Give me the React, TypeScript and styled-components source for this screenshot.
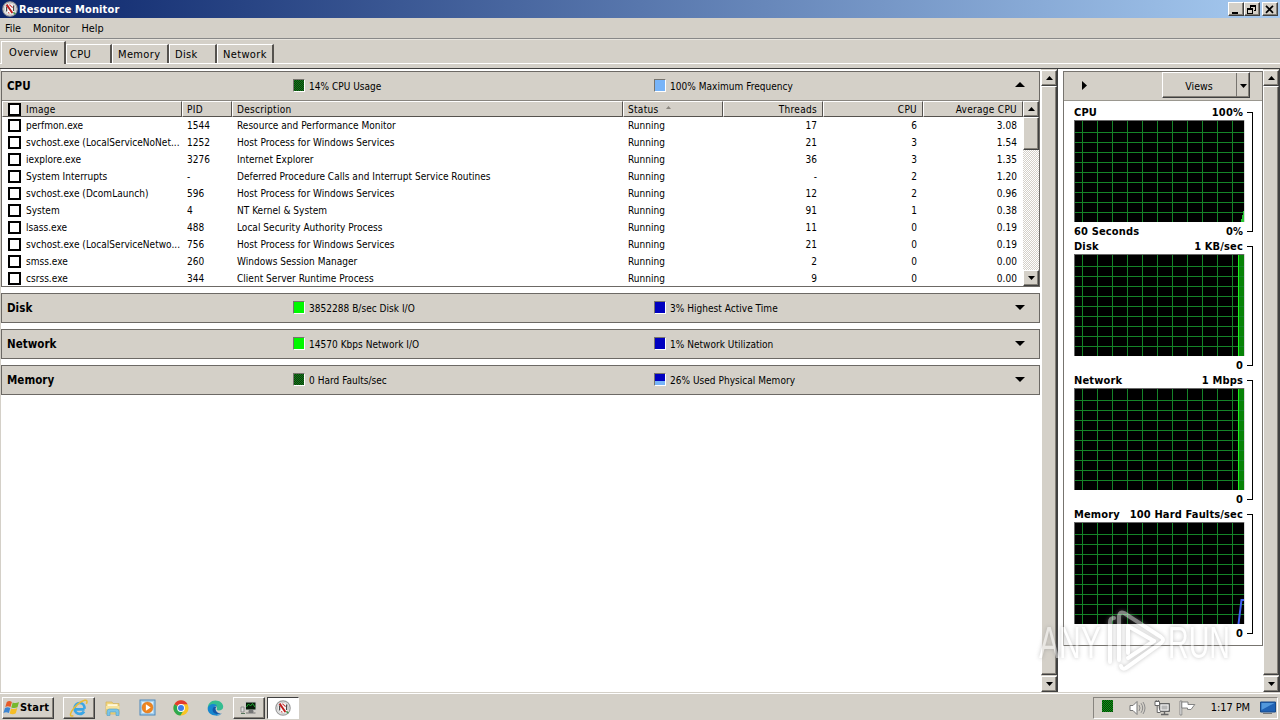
import type { ReactNode } from 'react';
import styled, { createGlobalStyle, css } from 'styled-components';

type Process = {
    image: string;
    pid: string;
    description: string;
    threads: string;
    cpu: string;
    average: string;
};

const processes: Process[] = [
    { image: 'perfmon.exe', pid: '1544', description: 'Resource and Performance Monitor', threads: '17', cpu: '6', average: '3.08' },
    { image: 'svchost.exe (LocalServiceNoNet...', pid: '1252', description: 'Host Process for Windows Services', threads: '21', cpu: '3', average: '1.54' },
    { image: 'iexplore.exe', pid: '3276', description: 'Internet Explorer', threads: '36', cpu: '3', average: '1.35' },
    { image: 'System Interrupts', pid: '-', description: 'Deferred Procedure Calls and Interrupt Service Routines', threads: '-', cpu: '2', average: '1.20' },
    { image: 'svchost.exe (DcomLaunch)', pid: '596', description: 'Host Process for Windows Services', threads: '12', cpu: '2', average: '0.96' },
    { image: 'System', pid: '4', description: 'NT Kernel & System', threads: '91', cpu: '1', average: '0.38' },
    { image: 'lsass.exe', pid: '488', description: 'Local Security Authority Process', threads: '11', cpu: '0', average: '0.19' },
    { image: 'svchost.exe (LocalServiceNetwo...', pid: '756', description: 'Host Process for Windows Services', threads: '21', cpu: '0', average: '0.19' },
    { image: 'smss.exe', pid: '260', description: 'Windows Session Manager', threads: '2', cpu: '0', average: '0.00' },
    { image: 'csrss.exe', pid: '344', description: 'Client Server Runtime Process', threads: '9', cpu: '0', average: '0.00' },
];

const gridX = [8, 23, 38, 53, 68, 83, 98, 113, 128, 143, 158];
const gridY = [12, 22, 32, 42, 52, 62, 72, 82, 92];

const Arrow = ({ dir, size = 7 }: { dir: 'up' | 'down' | 'right'; size?: number }) => {
    const half = Math.ceil(size / 2);
    if (dir === 'right') {
        return (
            <svg width={half + 1} height={size + 2} viewBox={`0 0 ${half + 1} ${size + 2}`}>
                <path d={`M0 0L${half + 1} ${(size + 2) / 2}L0 ${size + 2}Z`} />
            </svg>
        );
    }
    return (
        <svg width={size} height={half} viewBox={`0 0 ${size} ${half}`}>
            <path d={dir === 'up' ? `M0 ${half}L${size / 2} 0L${size} ${half}Z` : `M0 0L${size} 0L${size / 2} ${half}Z`} />
        </svg>
    );
};

const GaugeIcon = ({ size = 16 }: { size?: number }) => (
    <svg width={size} height={size} viewBox="0 0 16 16">
        <circle cx="8" cy="8" r="7.2" fill="#eee" stroke="#9a9a9a" strokeWidth="1.2" />
        <circle cx="8" cy="8" r="5.5" fill="#fff" stroke="#b5b5b5" strokeWidth=".7" />
        <path d="M4.6 10.4V5.4M11.6 10V4.6" stroke="#4a4a4a" strokeWidth="1.3" />
        <path d="M4.6 3.6l5.8 8.4" stroke="#c01c1c" strokeWidth="2" />
        <path d="M7.4 3.6l3.2 3M6 11.4l1.4 1" stroke="#c23c3c" strokeWidth="1.1" />
        <path d="M11.4 11.2l2 2" stroke="#4e9a52" strokeWidth="1.6" />
    </svg>
);

const IeIcon = () => (
    <svg width="20" height="18" viewBox="0 0 20 18">
        <path d="M15.6 10.3H6.3M15.6 9.8C15.6 6.3 13.6 4 10.7 4 7.7 4 5.6 6.4 5.6 9.5s2.1 5.4 5.2 5.4c2 0 3.4-.9 4.2-2.4" fill="none" stroke="#3aa6e6" strokeWidth="2.7" />
        <path d="M4.4 16.6C1.4 18 .6 16 2.6 12.4 5 8 11 2.4 15.6 1.3c2.6-.5 3 1.2 1.8 3.6" fill="none" stroke="#e9bb35" strokeWidth="1.5" />
    </svg>
);

const FolderIcon = () => (
    <svg width="16" height="16" viewBox="0 0 16 16">
        <path d="M1 2h6l1 1.5h6V14H1z" fill="#f1d67c" stroke="#d2b25b" strokeWidth=".7" />
        <path d="M2.5 4.2h10v3h-10z" fill="#fff8dc" />
        <path d="M1 6h13.5V9H1z" fill="#f7e39c" />
        <path d="M2 15.5v-4Q2 9 4.5 9h7Q14 9 14 11.5v4h-3V12H5v3.5z" fill="#79c5e8" stroke="#529dc6" strokeWidth=".6" />
    </svg>
);

const PlayerIcon = () => (
    <svg width="17" height="17" viewBox="0 0 17 17">
        <rect x="1" y="1" width="15" height="15" fill="#a9d2ef" stroke="#4d88bb" />
        <rect x="3" y="3" width="11" height="11" fill="#dceefa" />
        <circle cx="8.5" cy="8.5" r="5.5" fill="#ed8420" stroke="#d56f15" strokeWidth=".5" />
        <path d="M6.9 5.3l4.8 3.2-4.8 3.2z" fill="#fff" />
    </svg>
);

const ChromeIcon = () => (
    <svg width="16" height="16" viewBox="0 0 16 16">
        <circle cx="8" cy="8" r="7.6" fill="#f9c526" />
        <path d="M8 8L1.4 4.2A7.6 7.6 0 0 1 14.6 4.2H8z" fill="#e33b2e" />
        <path d="M1.4 4.2A7.6 7.6 0 0 0 7.4 15.6L10.9 10 8 8z" fill="#2da94f" />
        <circle cx="8" cy="8" r="3.9" fill="#fff" />
        <circle cx="8" cy="8" r="3" fill="#3f7de8" />
    </svg>
);

const EdgeIcon = () => (
    <svg width="17" height="16" viewBox="0 0 17 16">
        <path d="M.8 8.2C.8 3.7 4 .5 8.4.5c4.6 0 7.8 3 7.8 6.2 0 2.6-2 3.7-4.5 3.7-2 0-2.4-.8-1.8-1.6C10.4 7 9 5.3 6.8 5.3 3.6 5.3 1.3 7 .8 8.2z" fill="#35bd91" />
        <path d="M.7 8.6C1 5.8 3.5 4 6.4 4c1.8 0 3 .8 3.6 1.8C5.9 5.6 5.3 12 9.6 14c2 .8 3.6.4 5-.6-1.4 1.6-3.8 2.4-6 2.2C4.2 15.4.5 12.6.7 8.6z" fill="#1787cf" />
        <path d="M5.6 9.3C5.2 13.4 9.9 15.5 14.8 13c-3 .6-6-.6-6.3-4 .1-1.2.5-1.8 1.3-2.3-2.2-.8-4 .6-4.2 2.6z" fill="#1258a8" />
    </svg>
);

const PerfmonIcon = () => (
    <svg width="18" height="16" viewBox="0 0 18 16">
        <path d="M1 7h3v5H1z" fill="#ddd" stroke="#777" strokeWidth=".7" />
        <path d="M5 1.5h11.5v9H5z" fill="#c8c8c8" />
        <path d="M6 2.5h9.5v7H6z" fill="#061a08" />
        <path d="M6.5 7l2-3 2 2 2-2.5L15 7" fill="none" stroke="#21ad35" strokeWidth="1" />
        <path d="M9 10.5h4v2H9zM6 13h9.5" fill="#777" stroke="#777" />
        <path d="M1 13.5h4" stroke="#55745a" />
    </svg>
);

const StartFlag = () => (
    <svg width="17" height="16" viewBox="0 0 17 16">
        <path d="M3.8 1.9Q6.2.2 8.9 1.9L7.5 7.1Q4.9 5.6 2.3 7.1z" fill="#e75b28" />
        <path d="M9.7 2.4Q12.6 3.8 16 2l-1.5 5.3Q11.4 8.8 8.3 7.5z" fill="#77b82d" />
        <path d="M2 7.9q2.7-1.5 5.3.1L5.9 13.1Q3.1 11.6.4 13.1z" fill="#3c85d2" />
        <path d="M8.1 8.4q3 1.3 6.2-.3l-1.5 5.2q-3 1.6-6.1.2z" fill="#f5bd25" />
    </svg>
);

const SpeakerIcon = () => (
    <svg width="17" height="16" viewBox="0 0 17 16">
        <path d="M1 5.5h3L8 1.5v13L4 10.5H1z" fill="#fff" stroke="#777" />
        <path d="M10 5q2 3 0 6M12 3.2q3.4 4.8 0 9.6M14 2q4 6 0 12" fill="none" stroke="#8b8b8b" />
    </svg>
);

const NetIcon = () => (
    <svg width="17" height="16" viewBox="0 0 17 16">
        <path d="M5.5 3.5h10v8h-10z" fill="#aaa" stroke="#666" />
        <path d="M7 5h7v5H7z" fill="#b8b8b8" stroke="#fff" strokeWidth=".8" />
        <path d="M10.5 12v2M7 14.5h7.5" stroke="#666" strokeWidth="1.4" />
        <path d="M1 1.5h4.5v4H1zM3.2 5.5v7h3.3" fill="#fff" stroke="#666" />
        <path d="M2.2 0v2M4.3 0v2" stroke="#666" />
    </svg>
);

const FlagIcon = () => (
    <svg width="17" height="16" viewBox="0 0 17 16">
        <path d="M1 1h1.8v14H1z" fill="#fff" stroke="#777" strokeWidth=".8" />
        <path d="M2.8 2H9v2.5h6.8L12 9.5H8.5V8H2.8z" fill="#fff" stroke="#777" strokeWidth=".9" />
    </svg>
);

const DesktopIcon = () => (
    <svg width="16" height="14" viewBox="0 0 16 14">
        <path d="M.5 1h15v10H.5z" fill="#2062b4" stroke="#164988" />
        <path d="M1.5 2h13l-13 7z" fill="#5298dc" />
        <path d="M3 12.5h9" stroke="#777" />
    </svg>
);

type GraphKind = 'cpu' | 'full' | 'memory';

const Graph = ({ kind }: { kind: GraphKind }) => (
    <svg width="171" height="102" viewBox="0 0 171 102" shapeRendering="crispEdges">
        <rect width="171" height="102" fill="#000" />
        {kind === 'full' && <rect x="164" y="1" width="6" height="101" fill="#078207" />}
        {gridX.map((x) => <rect key={x} x={x} y="1" width="1" height="101" fill="#158428" />)}
        {gridY.map((y) => <rect key={y} x="1" y={y} width="169" height="1" fill="#158428" />)}
        {kind === 'full' && <rect x="164" y="1" width="1" height="101" fill="#1df01d" />}
        {kind === 'cpu' && <path d="M167 102v-3h1v-4h1v-4h1v11z" fill="#27c733" />}
        {kind === 'memory' && <path d="M164.5 102l1-8 2-16h3" fill="none" stroke="#4261f4" strokeWidth="2" shapeRendering="auto" />}
        <path d="M0 0h170v1H1v101H0z" fill="#686868" />
        <path d="M170 0h1v102h-1z" fill="#d8d8d8" />
    </svg>
);

const GraphSection = ({ name, max, min, span, kind }: { name: string; max: string; min: string; span?: string; kind: GraphKind }) => (
    <Section>
        <GraphColumn>
            <GraphLabel><span>{name}</span><span>{max}</span></GraphLabel>
            <Graph kind={kind} />
            <GraphLabel $below><span>{span}</span><span>{min}</span></GraphLabel>
        </GraphColumn>
        <Bracket />
    </Section>
);

const ScrollBar = ({ thumb, inner }: { thumb: number; inner?: boolean }) => (
    <ScrollTrack $inner={inner}>
        <ScrollButton><Arrow dir="up" /></ScrollButton>
        <ScrollThumb $height={thumb} />
        <TrackSpace />
        <ScrollButton><Arrow dir="down" /></ScrollButton>
    </ScrollTrack>
);

type SwatchKind = 'dark' | 'green' | 'sky' | 'blue' | 'mixed';

const PanelHeader = ({ name, left, right, colors, open }: { name: string; left: string; right: string; colors: [SwatchKind, SwatchKind]; open?: boolean }) => (
    <HeaderRow>
        <PanelName>{name}</PanelName>
        <Stat><Swatch $kind={colors[0]} />{left}</Stat>
        <Stat><Swatch $kind={colors[1]} />{right}</Stat>
        <Toggle $open={open}><Arrow dir={open ? 'up' : 'down'} size={10} /></Toggle>
    </HeaderRow>
);

const Tray = ({ children }: { children: ReactNode }) => <TrayBox>{children}</TrayBox>;

const App = () => (
    <Window>
        <GlobalStyle />
        <TitleBar>
            <GaugeIcon />
            <Title>Resource Monitor</Title>
            <Caption><svg width="10" height="9"><path d="M1 7h6v2H1z" /></svg></Caption>
            <Caption><svg width="10" height="9"><path d="M3 0h6v6H7V5h1V2H4v1H3zM0 3h6v6H0zM1 5v3h4V5z" fillRule="evenodd" /></svg></Caption>
            <Caption $gap><svg width="10" height="9"><path d="M1 .8l7 7M8 .8l-7 7" stroke="#000" strokeWidth="1.7" /></svg></Caption>
        </TitleBar>
        <MenuBar>
            <span>File</span>
            <span>Monitor</span>
            <span>Help</span>
        </MenuBar>
        <Tabs>
            <Tab $width={65} $active>Overview</Tab>
            <Tab $width={46}>CPU</Tab>
            <Tab $width={57} $pad={5}>Memory</Tab>
            <Tab $width={48} $pad={5}>Disk</Tab>
            <Tab $width={57} $pad={5}>Network</Tab>
        </Tabs>
        <Body>
            <Panels>
                <Panel>
                    <PanelHeader name="CPU" left="14% CPU Usage" right="100% Maximum Frequency" colors={['dark', 'sky']} open />
                    <ListArea>
                        <Table>
                            <HeadRow>
                                <HeadCell><CheckBox />Image</HeadCell>
                                <HeadCell>PID</HeadCell>
                                <HeadCell>Description</HeadCell>
                                <HeadCell>Status<SortMark><Arrow dir="up" size={5} /></SortMark></HeadCell>
                                <HeadCell $right>Threads</HeadCell>
                                <HeadCell $right>CPU</HeadCell>
                                <HeadCell $right>Average CPU</HeadCell>
                            </HeadRow>
                            {processes.map((p) => (
                                <Row key={p.pid}>
                                    <Cell><CheckBox />{p.image}</Cell>
                                    <Cell>{p.pid}</Cell>
                                    <Cell>{p.description}</Cell>
                                    <Cell>Running</Cell>
                                    <Cell $right>{p.threads}</Cell>
                                    <Cell $right>{p.cpu}</Cell>
                                    <Cell $right>{p.average}</Cell>
                                </Row>
                            ))}
                        </Table>
                        <ScrollBar thumb={33} inner />
                    </ListArea>
                </Panel>
                <Panel>
                    <PanelHeader name="Disk" left="3852288 B/sec Disk I/O" right="3% Highest Active Time" colors={['green', 'blue']} />
                </Panel>
                <Panel>
                    <PanelHeader name="Network" left="14570 Kbps Network I/O" right="1% Network Utilization" colors={['green', 'blue']} />
                </Panel>
                <Panel>
                    <PanelHeader name="Memory" left="0 Hard Faults/sec" right="26% Used Physical Memory" colors={['dark', 'mixed']} />
                </Panel>
            </Panels>
            <ScrollBar thumb={589} />
            <SidePane>
                <SidePanel>
                    <SideHeader>
                        <Arrow dir="right" />
                        <Views>
                            <ViewsLabel>Views</ViewsLabel>
                            <ViewsArrow><Arrow dir="down" /></ViewsArrow>
                        </Views>
                    </SideHeader>
                    <GraphSection name="CPU" max="100%" min="0%" span="60 Seconds" kind="cpu" />
                    <GraphSection name="Disk" max="1 KB/sec" min="0" kind="full" />
                    <GraphSection name="Network" max="1 Mbps" min="0" kind="full" />
                    <GraphSection name="Memory" max="100 Hard Faults/sec" min="0" kind="memory" />
                </SidePanel>
            </SidePane>
            <ScrollBar thumb={589} />
        </Body>
        <Taskbar>
            <StartButton><StartFlag />Start</StartButton>
            <TaskButton $look="raised"><IeIcon /></TaskButton>
            <TaskButton><FolderIcon /></TaskButton>
            <TaskButton><PlayerIcon /></TaskButton>
            <TaskButton><ChromeIcon /></TaskButton>
            <TaskButton><EdgeIcon /></TaskButton>
            <TaskButton $look="raised"><PerfmonIcon /></TaskButton>
            <TaskButton $look="pressed"><GaugeIcon /></TaskButton>
            <Tray>
                <CpuMeter />
                <SpeakerIcon />
                <NetIcon />
                <FlagIcon />
                <Clock>1:17 PM</Clock>
                <DesktopIcon />
            </Tray>
        </Taskbar>
        <Watermark>
            <svg width="200" height="68" viewBox="0 0 200 68">
                <g fill="#fff">
                    <text x="3" y="52" fontSize="45" textLength="62" lengthAdjust="spacingAndGlyphs">ANY</text>
                    <text x="132" y="52" fontSize="45" textLength="62" lengthAdjust="spacingAndGlyphs">RUN</text>
                </g>
                <g fill="none" stroke="#fff" strokeWidth="4" strokeLinejoin="round" strokeLinecap="round">
                    <path d="M74 56V16q0-4 4-4" />
                    <path d="M83 54V10q1-5 5-3l37 24q4 3 0 6L90 62q-4 2-5-2" />
                    <path d="M92 47V20l26 15" />
                    <path d="M92 52l26-17" />
                </g>
            </svg>
        </Watermark>
    </Window>
);

export default App;

// Styled Components
const GlobalStyle = createGlobalStyle`
  * {
    box-sizing: border-box;
  }

  body {
    margin: 0;
    overflow: hidden;
    background: #d4d0c8;
  }

  svg {
    display: block;
    flex: none;
  }
`;

const raised = css`
  background: #d4d0c8;
  border: 1px solid;
  border-color: #fff #404040 #404040 #fff;
  box-shadow: inset -1px -1px #848078;
`;

const Window = styled.div`
  position: relative;
  display: flex;
  flex-direction: column;
  width: 1280px;
  height: 720px;
  background: #d4d0c8;
  color: #000;
  font-family: 'DejaVu Sans Condensed', 'DejaVu Sans', sans-serif;
  font-size: 10px;
  letter-spacing: 0.03px;
  white-space: nowrap;
`;

const TitleBar = styled.div`
  display: flex;
  align-items: center;
  height: 18px;
  padding: 0 2px;
  background: linear-gradient(90deg, #0a246a, #a6caf0);
`;

const Title = styled.div`
  flex: 1;
  padding-left: 1px;
  color: #fff;
  font-size: 11px;
  font-weight: bold;
  letter-spacing: 0.12px;
`;

const Caption = styled.div<{ $gap?: boolean }>`
  ${raised}
  display: flex;
  align-items: center;
  justify-content: center;
  width: 16px;
  height: 14px;
  margin-left: ${({ $gap }) => ($gap ? '2px' : '0')};
`;

const MenuBar = styled.div`
  display: flex;
  gap: 12px;
  height: 21px;
  padding: 4px 5px 0;
  border-bottom: 1px solid #888;
  font-size: 10.8px;
  letter-spacing: -0.05px;
  line-height: 13px;
`;

const Tabs = styled.div`
  display: flex;
  align-items: flex-end;
  height: 30px;
  padding: 0 0 4px 1px;
  border-top: 1px solid #e8e5df;
  border-bottom: 1px solid #404040;
  box-shadow: inset 0 -4px #d4d0c8, inset 0 -5px #fff;
`;

const Tab = styled.div<{ $width: number; $active?: boolean; $pad?: number }>`
  width: ${({ $width }) => $width}px;
  height: ${({ $active }) => ($active ? 23 : 19)}px;
  padding: ${({ $active }) => ($active ? 4 : 3)}px 0 0 ${({ $active, $pad = 3 }) => ($active ? 7 : $pad)}px;
  margin-bottom: ${({ $active }) => ($active ? 0 : 1)}px;
  background: #d4d0c8;
  border: solid;
  border-width: 1px 2px 0 1px;
  border-color: #fff #55524e #fff #fff;
  font-size: 11px;
  letter-spacing: 0.35px;
  line-height: 13px;
`;

const Body = styled.div`
  display: flex;
  height: 623px;
  background: #fff;
`;

const Panels = styled.div`
  display: flex;
  flex-direction: column;
  gap: 6px;
  width: 1041px;
  padding: 2px 1px 0 0;
  border-left: 1px solid #d4d0c8;
`;

const Panel = styled.div`
  border: 1px solid #6c6965;
`;

const HeaderRow = styled.div`
  display: grid;
  grid-template-columns: 291px 361px 361px 10px;
  align-items: center;
  height: 28px;
  background: #d4d0c8;
`;

const PanelName = styled.div`
  padding-left: 5px;
  font-size: 11.5px;
  font-weight: bold;
`;

const Stat = styled.div`
  display: flex;
  align-items: center;
  gap: 4px;
  padding-top: 1px;
`;

const Toggle = styled.div<{ $open?: boolean }>`
  padding-bottom: ${({ $open }) => ($open ? 4 : 2)}px;
`;

const swatches = {
    dark: 'repeating-conic-gradient(#0a3d0a 0 25%, #147a1c 0 50%) 0 0 / 2px 2px',
    green: '#00f800',
    sky: '#78b4f8',
    blue: '#0000c0',
    mixed: 'linear-gradient(#0000c0 65%, #78b4f8 65%)',
};

const Swatch = styled.span<{ $kind: SwatchKind }>`
  width: 12px;
  height: 13px;
  margin-top: -2px;
  border: 1px solid;
  border-color: #77746e #fff #fff #77746e;
  background: ${({ $kind }) => swatches[$kind]};
`;

const ListArea = styled.div`
  display: flex;
  height: 186px;
  border-top: 1px solid #88857f;
`;

const Table = styled.div`
  width: 1021px;
`;

const Row = styled.div`
  display: grid;
  grid-template-columns: 180px 50px 391px 100px 100px 100px 100px;
  height: 17px;
`;

const HeadRow = styled(Row)`
  height: 16px;
`;

const Cell = styled.div<{ $right?: boolean }>`
  display: flex;
  align-items: center;
  justify-content: ${({ $right }) => ($right ? 'flex-end' : 'flex-start')};
  padding: 0 6px 0 5px;
`;

const HeadCell = styled(Cell)`
  padding: 0 5px 0 4px;
  background: #d4d0c8;
  border: 1px solid;
  border-color: #fff #55524e #55524e #fff;
  letter-spacing: 0.3px;
`;

const CheckBox = styled.span`
  flex: none;
  width: 13px;
  height: 13px;
  margin: 0 5px 0 1px;
  border: 2px solid #000;
  background: #fff;
`;

const SortMark = styled.span`
  margin: -3px 0 0 8px;

  svg {
    fill: #8a867e;
  }
`;

const ScrollTrack = styled.div<{ $inner?: boolean }>`
  display: flex;
  flex: none;
  flex-direction: column;
  width: ${({ $inner }) => ($inner ? 16 : 17)}px;
  padding: ${({ $inner }) => ($inner ? '0' : '1px 0 0')};
  border-right: ${({ $inner }) => ($inner ? '0' : '1px solid #404040')};
  background: ${({ $inner }) => ($inner ? 'repeating-conic-gradient(#d4d0c8 0 25%, #fff 0 50%) 0 0 / 2px 2px' : '#d4d0c8')};
`;

const ScrollButton = styled.div`
  ${raised}
  display: flex;
  align-items: center;
  justify-content: center;
  width: 16px;
  height: 16px;
`;

const ScrollThumb = styled.div<{ $height: number }>`
  ${raised}
  width: 16px;
  height: ${({ $height }) => $height}px;
`;

const TrackSpace = styled.div`
  flex: 1;
`;

const SidePane = styled.div`
  width: 205px;
  padding: 2px 0 0 5px;
`;

const SidePanel = styled.div`
  width: 200px;
  height: 575px;
  border: 1px solid #77746f;
`;

const SideHeader = styled.div`
  display: flex;
  align-items: center;
  justify-content: space-between;
  height: 29px;
  margin-bottom: 4px;
  padding: 0 12px 2px 18px;
  background: #d4d0c8;
  border-bottom: 1px solid #9a978f;
`;

const Views = styled.div`
  ${raised}
  display: flex;
  width: 88px;
  height: 26px;
`;

const ViewsLabel = styled.div`
  display: flex;
  flex: 1;
  align-items: center;
  justify-content: center;
  padding: 1px 1px 0 0;
  font-size: 10.5px;
`;

const ViewsArrow = styled.div`
  display: flex;
  align-items: center;
  justify-content: center;
  width: 13px;
  padding-top: 2px;
  border-left: 1px solid #77746f;
`;

const Section = styled.div`
  display: flex;
  height: 134px;
  padding-left: 10px;
`;

const GraphColumn = styled.div`
  width: 171px;
`;

const GraphLabel = styled.div<{ $below?: boolean }>`
  display: flex;
  justify-content: space-between;
  height: 15px;
  margin-top: ${({ $below }) => ($below ? 2 : 0)}px;
  padding-right: 2px;
  font-size: 11px;
  font-weight: bold;
  letter-spacing: 0.15px;
  line-height: 15px;
`;

const Bracket = styled.div`
  width: 6px;
  height: 120px;
  margin: 7px 0 0 2px;
  border: solid #000;
  border-width: 1px 1px 1px 0;
`;

const Taskbar = styled.div`
  display: flex;
  align-items: center;
  height: 28px;
  padding: 2px 2px 0 2px;
  border-top: 1px solid #d4d0c8;
  box-shadow: inset 0 1px #fff;
`;

const StartButton = styled.div`
  ${raised}
  display: flex;
  align-items: center;
  width: 52px;
  height: 22px;
  margin-right: 9px;
  padding-left: 0;
  font-size: 11px;
  font-weight: bold;
  letter-spacing: 0.2px;
`;

const TaskButton = styled.div<{ $look?: 'raised' | 'pressed' }>`
  display: flex;
  align-items: center;
  justify-content: center;
  width: 32px;
  height: 22px;
  margin-right: 2px;
  ${({ $look }) => $look === 'raised' && raised}
  ${({ $look }) => $look === 'pressed' && css`
    background: #fff;
    border: 1px solid;
    border-color: #404040 #fff #fff #404040;
  `}
`;

const TrayBox = styled.div`
  display: flex;
  align-items: center;
  gap: 8px;
  height: 22px;
  margin-left: auto;
  padding: 0 1px 0 8px;
  border: 1px solid;
  border-color: #88857f #fff #fff #88857f;
`;

const CpuMeter = styled.span`
  width: 11px;
  height: 12px;
  margin: -3px 8px 0 0;
  background: repeating-conic-gradient(#063c06 0 25%, #0d9a16 0 50%) 0 0 / 2px 2px;
`;

const Clock = styled.span`
  margin: 0 2px 0 7px;
  font-size: 11px;
  letter-spacing: -0.1px;
`;

const Watermark = styled.div`
  position: absolute;
  top: 606px;
  left: 1036px;
  font-family: 'Liberation Sans', sans-serif;
  opacity: 0.5;
  filter: drop-shadow(0 0 2px #888);
`;
